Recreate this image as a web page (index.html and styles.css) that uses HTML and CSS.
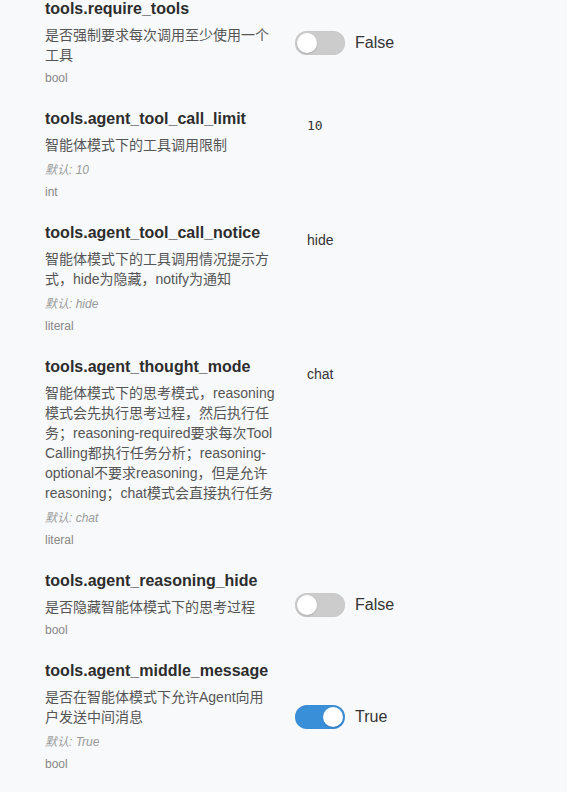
FILE: index.html
```html
<!DOCTYPE html>
<html lang="zh">
<head>
<meta charset="utf-8">
<title>Settings</title>
<link rel="stylesheet" href="styles.css">
</head>
<body>
<div class="list">
  <div class="row">
    <div class="info">
      <div class="name">tools.require_tools</div>
      <div class="desc">是否强制要求每次调用至少使用一个工具</div>
      <div class="type">bool</div>
    </div>
    <div class="value value-switch">
      <span class="switch"><span class="knob"></span></span>
      <span class="switch-label">False</span>
    </div>
  </div>

  <div class="row">
    <div class="info">
      <div class="name">tools.agent_tool_call_limit</div>
      <div class="desc">智能体模式下的工具调用限制</div>
      <div class="default">默认: 10</div>
      <div class="type">int</div>
    </div>
    <div class="value value-text mono">10</div>
  </div>

  <div class="row">
    <div class="info">
      <div class="name">tools.agent_tool_call_notice</div>
      <div class="desc">智能体模式下的工具调用情况提示方式，hide为隐藏，notify为通知</div>
      <div class="default">默认: hide</div>
      <div class="type">literal</div>
    </div>
    <div class="value value-text">hide</div>
  </div>

  <div class="row">
    <div class="info">
      <div class="name">tools.agent_thought_mode</div>
      <div class="desc">智能体模式下的思考模式，reasoning模式会先执行思考过程，然后执行任务；reasoning-required要求每次Tool Calling都执行任务分析；reasoning-optional不要求reasoning，但是允许reasoning；chat模式会直接执行任务</div>
      <div class="default">默认: chat</div>
      <div class="type">literal</div>
    </div>
    <div class="value value-text">chat</div>
  </div>

  <div class="row">
    <div class="info">
      <div class="name">tools.agent_reasoning_hide</div>
      <div class="desc">是否隐藏智能体模式下的思考过程</div>
      <div class="type">bool</div>
    </div>
    <div class="value value-switch">
      <span class="switch"><span class="knob"></span></span>
      <span class="switch-label">False</span>
    </div>
  </div>

  <div class="row">
    <div class="info">
      <div class="name">tools.agent_middle_message</div>
      <div class="desc">是否在智能体模式下允许Agent向用户发送中间消息</div>
      <div class="default">默认: True</div>
      <div class="type">bool</div>
    </div>
    <div class="value value-switch">
      <span class="switch on"><span class="knob"></span></span>
      <span class="switch-label">True</span>
    </div>
  </div>
</div>
</body>
</html>
```

FILE: styles.css
```css
html, body {
  margin: 0;
  padding: 0;
  background: #f8f9fb;
}

body {
  font-family: "Liberation Sans", "Noto Sans CJK SC", sans-serif;
  color: #333;
}

.list {
  display: flex;
  flex-direction: column;
  gap: 21px;
  margin-top: -2px;
  padding-left: 45px;
}

.row {
  display: grid;
  grid-template-columns: 230px 1fr;
  column-gap: 20px;
}

.name {
  font-size: 16px;
  font-weight: bold;
  line-height: 22px;
  color: #2d2d2d;
  margin-bottom: 5px;
  white-space: nowrap;
}

.desc {
  font-size: 14px;
  line-height: 20px;
  color: #555;
  margin-bottom: 5px;
}

.default {
  font-size: 12px;
  line-height: 17px;
  font-style: italic;
  color: #999;
  margin-top: 7px;
  margin-bottom: 5px;
}

.type {
  font-size: 12px;
  line-height: 17px;
  color: #888;
}

.value-text {
  align-self: start;
  padding: 8px 12px 0;
  font-size: 14px;
  line-height: 20px;
  color: #333;
}

.mono {
  font-family: "DejaVu Sans Mono", monospace;
  font-size: 13px;
}

.value-switch {
  align-self: center;
  display: flex;
  align-items: center;
}

.switch {
  position: relative;
  width: 50px;
  height: 24px;
  border-radius: 12px;
  background: #cccccc;
  box-shadow: inset 0 0 1px rgba(0, 0, 0, 0.15);
  flex: none;
}

.switch .knob {
  position: absolute;
  top: 2px;
  left: 2px;
  width: 20px;
  height: 20px;
  border-radius: 50%;
  background: #fff;
  box-shadow: 0 1px 2px rgba(0, 0, 0, 0.15);
}

.switch.on {
  background: #3a8fd9;
}

.switch.on .knob {
  left: 28px;
}

.switch-label {
  margin-left: 10px;
  font-size: 16px;
  line-height: 22px;
  color: #333;
}
```
